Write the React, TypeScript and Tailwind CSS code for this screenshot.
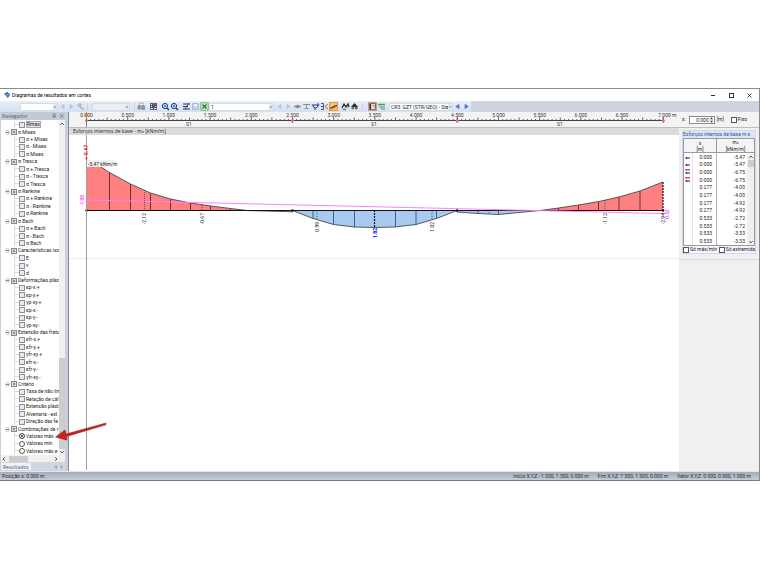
import type { ReactNode } from "react";
import clsx from "clsx";

type Node = { label: string; kind: "group" | "check" | "radio"; on?: boolean };

const group = (label: string, items: string[]): Node[] => [
  { label, kind: "group" },
  ...items.map((item): Node => ({ label: item, kind: "check" })),
];

const tree: Node[] = [
  { label: "Rmax", kind: "check", on: true },
  ...group("σ.Mises", ["σ.+.Mises", "σ.-.Mises", "σ.Mises"]),
  ...group("σ.Tresca", ["σ.+.Tresca", "σ.-.Tresca", "σ.Tresca"]),
  ...group("σ.Rankine", ["σ.+.Rankine", "σ.-.Rankine", "σ.Rankine"]),
  ...group("σ.Bach", ["σ.+.Bach", "σ.-.Bach", "σ.Bach"]),
  ...group("Características iso", ["E", "v", "d"]),
  ...group("Deformações plást", ["εp-x.+", "εp-y.+", "γp-xy.+", "εp-x.-", "εp-y.-", "γp-xy.-"]),
  ...group("Extensão das fratu", ["εfr-x.+", "εfr-y.+", "γfr-xy.+", "εfr-x.-", "εfr-y.-", "γfr-xy.-"]),
  ...group("Critério", ["Taxa de não lin", "Relação de cál", "Extensão plást", "Alvenaria - ext", "Direção das fe"]),
  { label: "Combinações de r", kind: "group" },
  { label: "Valores máx", kind: "radio", on: true },
  { label: "Valores mín", kind: "radio" },
  { label: "Valores máx e", kind: "radio" },
];

const rows: [string, string][] = [
  ["0.000", "-5.47"],
  ["0.000", "-5.47"],
  ["0.000", "-6.75"],
  ["0.000", "-6.75"],
  ["0.277", "-4.00"],
  ["0.277", "-4.00"],
  ["0.277", "-4.92"],
  ["0.277", "-4.92"],
  ["0.533", "-2.72"],
  ["0.533", "-2.72"],
  ["0.533", "-3.33"],
  ["0.533", "-3.33"],
];

function Tool({ label, active, children }: { label: string; active?: boolean; children: ReactNode }) {
  return (
    <button
      aria-label={label}
      className={clsx("h-[9px] w-[9px] shrink-0", active && "bg-[#ffc45c] outline outline-[#d8a04a] -outline-offset-1")}
    >
      <svg viewBox="0 0 9 9" className="h-[9px] w-[9px]" fill="none">
        {children}
      </svg>
    </button>
  );
}

function Prev({ dim }: { dim?: boolean }) {
  return (
    <Tool label="Anterior">
      <path d="M6 2.5L2.8 4.5L6 6.5Z" fill={dim ? "#c6d4f0" : "#5b82dc"} stroke={dim ? "#9db2e0" : "#2c55bd"} strokeWidth=".6" />
    </Tool>
  );
}

function Next({ dim }: { dim?: boolean }) {
  return (
    <Tool label="Seguinte">
      <path d="M3 2.5L6.2 4.5L3 6.5Z" fill={dim ? "#c6d4f0" : "#5b82dc"} stroke={dim ? "#9db2e0" : "#2c55bd"} strokeWidth=".6" />
    </Tool>
  );
}

function Combo({ label, value, className }: { label: string; value?: string; className: string }) {
  return (
    <div className={clsx("relative h-[8px] shrink-0 border border-[#d5dbe6]", className)}>
      <select aria-label={label} className="block h-[6px] w-full appearance-none pl-px leading-[6px]">
        <option>{value}</option>
      </select>
      <svg viewBox="0 0 4 6" className="pointer-events-none absolute top-0 right-0 h-[6px] w-[4px] bg-[#e4e7ed]">
        <path d="M.8 2.5h2.4L2 4z" fill="#6a6f7a" />
      </svg>
    </div>
  );
}

function Magnifier() {
  return (
    <>
      <circle cx="4" cy="4" r="2.6" fill="#cfe4ff" stroke="#173c8c" strokeWidth="1" />
      <path d="M2.8 4h2.4M4 2.8v2.4" stroke="#173c8c" strokeWidth=".7" />
      <path d="M6 6l2 2" stroke="#173c8c" strokeWidth="1.4" />
    </>
  );
}

function Separator() {
  return <span className="h-[7px] w-px shrink-0 bg-[#c9d1df]" />;
}

function Toolbar() {
  return (
    <div className="flex h-[11px] shrink-0 items-center bg-[#ced3df]">
      <div className="flex h-full items-center bg-gradient-to-b from-[#eaeff8] to-[#d5dfef] pl-5">
        <Combo label="Corte" className="w-[38px] bg-white" />
        <Prev dim />
        <Next dim />
        <Tool label="Selecionar corte">
          <path d="M2 2h3v2H2zM5 6h2v2" stroke="#a9a0a8" strokeWidth=".9" />
          <path d="M3 4l3 3" stroke="#d08a8a" strokeWidth=".8" />
        </Tool>
        <div className="flex items-center gap-1 px-0.5">
          <Separator />
          <Combo label="Superfície" className="w-[38px] bg-[#eceef1]" />
          <Separator />
        </div>
        <div className="flex items-center gap-[3px]">
          <Tool label="Imprimir">
            <path d="M2.5 1h3.5v3h-3.5z" fill="#fff" stroke="#777" strokeWidth=".6" />
            <path d="M1 4h6.5v3H1z" fill="#a5adb8" stroke="#555c68" strokeWidth=".6" />
            <circle cx="6.7" cy="6.5" r="1.4" fill="#7b93bd" />
          </Tool>
          <Tool label="Tabela de resultados">
            <path d="M1 1.2h7v6.6H1z" fill="#34446f" />
            <path d="M1.8 2.6h1.4M1.8 4.5h1.2M6.2 4.5h1.2M1.8 6.5h2M5 6.5h2.4" stroke="#fff" strokeWidth="1" />
            <path d="M4 2.6h3.4M3.4 4.5h2.4" stroke="#dd3b32" strokeWidth="1.1" />
          </Tool>
          <div className="flex">
            <Tool label="Ampliar"><Magnifier /></Tool>
            <Tool label="Mostrar tudo"><Magnifier /></Tool>
          </div>
          <div className="flex">
            <Tool label="Definições">
              <path d="M1 2h7M1 4.5h5M1 7h4" stroke="#24345f" strokeWidth="1.1" />
              <path d="M7 1L3 7" stroke="#26457e" strokeWidth=".9" />
              <path d="M5 6h3v2H5z" fill="#6e8ac0" />
            </Tool>
            <Tool label="Guardar">
              <path d="M1.5 1.5h6v6h-6z" fill="#c3d0e6" stroke="#9aabc9" strokeWidth=".7" />
              <path d="M3 2h3v2.5H3z" fill="#edf2fa" />
            </Tool>
            <Tool label="Exportar para Excel">
              <path d="M.8.8h7.4v7.4H.8z" fill="#d8edd5" stroke="#5aa860" strokeWidth=".8" />
              <path d="M2.5 2.5l4 4M6.5 2.5l-4 4" stroke="#1d7a29" strokeWidth="1.3" />
            </Tool>
          </div>
        </div>
        <Combo label="Número" value="1" className="w-[65px] bg-white" />
        <div className="flex pl-px">
          <Prev dim />
          <Next dim />
          <Tool label="Ver valores">
            <path d="M1 4.5Q4.5 2 8 4.5Q4.5 7 1 4.5Z" fill="#c3c9cf" stroke="#7c838a" strokeWidth=".8" />
            <circle cx="4.5" cy="4.5" r=".9" fill="#5b636c" />
          </Tool>
          <Tool label="Média">
            <path d="M1 2.5h7M4.5 2.5v4M2.5 6.5h4" stroke="#7f9a87" strokeWidth="1" />
          </Tool>
          <Tool label="Alisamento">
            <path d="M.8 3h7.5M2 3q0 3 2.5 3t2.5-3V1M4 6v2" stroke="#2a3a7e" strokeWidth="1" />
          </Tool>
          <Tool label="Espelhar">
            <path d="M1 1.5h2.5v6H1M1 4.5h2.5" stroke="#30468e" strokeWidth=".9" />
            <path d="M8 2L5 4.5L8 7" stroke="#d23c3c" strokeWidth=".9" />
          </Tool>
          <Tool label="Linha média" active>
            <path d="M1 6L3.5 5.5L5.5 4L8 3.5" stroke="#26305c" strokeWidth="1.2" />
            <path d="M1 7.2L8 4.5" stroke="#cf4a2a" strokeWidth=".7" />
          </Tool>
        </div>
        <div className="flex px-[3px]">
          <Tool label="Valores extremos">
            <path d="M1 6l2-4 2 3 2-3 1 3" stroke="#252c2c" strokeWidth="1.3" />
            <path d="M2 7.5h3" stroke="#2f9a38" strokeWidth="1.3" />
            <path d="M5 5.5h2" stroke="#c9962a" strokeWidth="1.2" />
          </Tool>
          <Tool label="Cores">
            <path d="M4.5 1L8 5H1z" fill="#1e2b2b" />
            <circle cx="2.8" cy="6" r="1.4" fill="#2b9a3d" />
            <circle cx="6.2" cy="6" r="1.4" fill="#c92c2c" />
          </Tool>
        </div>
        <Separator />
        <div className="flex pr-[3px] pl-[5px]">
          <Tool label="Mostrar painel" active>
            <path d="M1.5 1.5h6v6h-6z" fill="#f5f7fb" stroke="#4a5278" strokeWidth=".8" />
            <path d="M2.5 2v5" stroke="#26305c" strokeWidth="1.4" />
            <path d="M4.5 3.2h2.5M4.5 5h2.5" stroke="#5877b8" strokeWidth=".8" />
          </Tool>
          <Tool label="Legenda">
            <path d="M1 2.5h7" stroke="#3fa14c" strokeWidth="1.6" />
            <path d="M2 5h6M4 7h4" stroke="#4f8f7c" strokeWidth="1" />
          </Tool>
        </div>
        <Combo label="Combinação" value="CR3: GZT (STR/GEO) - Sta" className="w-[64px] bg-white" />
        <Prev />
        <Next />
      </div>
    </div>
  );
}

function TreeRow({ node }: { node: Node }) {
  if (node.kind === "group") {
    return (
      <li className="flex min-h-0 flex-1 items-center pl-[4px]">
        <button aria-label={`Recolher ${node.label}`} className="relative h-[5px] w-[5px] shrink-0 rounded-full border border-[#c4c4c4] bg-white">
          <span className="absolute top-px left-0 h-px w-[3px] bg-[#888]" />
        </button>
        <label className="flex items-center whitespace-nowrap">
          <input type="checkbox" className="mx-px h-[6px] w-[6px] shrink-0 appearance-none border border-[#8a8a8a] bg-[#8f8f8f] outline outline-[#d8d8d8] -outline-offset-2" />
          {node.label}
        </label>
      </li>
    );
  }

  return (
    <li className="flex min-h-0 flex-1 items-center pl-[13px]">
      <span className="w-[5px] shrink-0 self-stretch border-l border-[#dcdcdc]">
        <span className="block h-1/2 border-b border-[#dcdcdc]" />
      </span>
      <label className="flex items-center whitespace-nowrap">
        {node.kind === "check" ? (
          <input type="checkbox" className="mr-px h-[6px] w-[6px] shrink-0 appearance-none border border-[#8b9198] bg-[#e6e9ee]" />
        ) : (
          <input
            type="radio"
            name="combination"
            defaultChecked={node.on}
            className="mr-px h-[6px] w-[6px] shrink-0 appearance-none rounded-full border border-[#555] bg-white checked:bg-[#222] checked:outline checked:outline-white checked:-outline-offset-2"
          />
        )}
        <span className={clsx(node.kind === "check" && node.on && "border border-[#a8a8a8] bg-[#e3e3e3] leading-[5px]")}>
          {node.label}
        </span>
      </label>
    </li>
  );
}

function Chevron({ d }: { d: string }) {
  return (
    <svg viewBox="0 0 6 6" className="h-[6px] w-[6px] shrink-0" fill="none" stroke="#404040" strokeWidth="1">
      <path d={d} />
    </svg>
  );
}

const UP = "M1.3 3.8L3 2.1L4.7 3.8";
const DOWN = "M1.3 2.2L3 3.9L4.7 2.2";
const LEFT = "M3.8 1.3L2.1 3L3.8 4.7";
const RIGHT = "M2.2 1.3L3.9 3L2.2 4.7";

function Navigator() {
  return (
    <aside className="flex w-[69px] shrink-0 flex-col border-r border-[#858b96] bg-[#c9d0dc] pr-[3px] pl-px">
      <header className="flex h-[8px] shrink-0 items-center justify-between bg-[#c3c9d5] px-px text-[#5c6370]">
        <h2 className="font-['Open_Sans','Noto_Sans',sans-serif]">Navegador</h2>
        <svg viewBox="0 0 12 6" className="h-[6px] w-[12px]" fill="none" stroke="#70757f" strokeWidth=".7">
          <path d="M1.2 1h2v2.5h-2zM.6 3.5h3.2M2.2 3.5v2M8 1l3.5 4M11.5 1L8 5" />
        </svg>
      </header>
      <div className="flex min-h-0 flex-1 bg-white">
        <ul className="flex min-w-0 flex-1 flex-col overflow-hidden pt-px">
          {tree.map((node, i) => (
            <TreeRow key={i} node={node} />
          ))}
        </ul>
        <div className="flex w-[6px] shrink-0 flex-col bg-[#f0f0f0] pt-px">
          <Chevron d={UP} />
          <div className="flex-1" />
          <div className="h-[91px] bg-[#cdcdcd]" />
          <Chevron d={DOWN} />
        </div>
      </div>
      <div className="flex h-[7px] shrink-0 items-center bg-[#f0f0f0] pr-[6px]">
        <Chevron d={LEFT} />
        <div className="ml-[2px] h-[6px] w-[19px] bg-[#cdcdcd]" />
        <div className="flex-1" />
        <Chevron d={RIGHT} />
      </div>
      <div className="flex h-[9px] shrink-0 items-center justify-between bg-[#cfd6e2]">
        <button className="h-[7px] bg-[#eff3f9] px-[2px] font-['Open_Sans','Noto_Sans',sans-serif] leading-[6px] text-[#44516a]">Resultados</button>
        <svg viewBox="0 0 12 6" className="h-[6px] w-[12px]" fill="none" stroke="#8a93a3" strokeWidth=".7">
          <path d="M3.5 1.5L1.5 3l2 1.5zM8 1.5L10 3L8 4.5z" />
        </svg>
      </div>
    </aside>
  );
}

// One metre of the section is 82.4 units wide, the section starts at x = 17.5
const toX = (m: number) => 17.5 + m * 82.4;

function Ruler() {
  return (
    <svg viewBox="0 0 610 15" preserveAspectRatio="xMinYMin" className="h-[15px] w-full bg-[#f3f3f3]">
      <path d={`M${toX(0)} 8.5H${toX(7)}`} stroke="#444" strokeWidth="1" />
      {Array.from({ length: 141 }, (_, i) => {
        const top = i % 10 === 0 ? 5 : i % 5 === 0 ? 5.5 : 7;
        return <path key={i} d={`M${toX(i / 20)} ${top}V9`} stroke="#444" strokeWidth=".8" />;
      })}
      {Array.from({ length: 15 }, (_, i) => (
        <text key={i} x={toX(i / 2) + (i === 14 ? 4 : 0)} y="4.5" textAnchor="middle" fill="#333">
          {(i / 2).toFixed(3)}
          {i === 14 && " m"}
        </text>
      ))}
      {[120, 305, 491].map((x) => (
        <text key={x} x={x} y="14" textAnchor="middle" fill="#333">
          S1
        </text>
      ))}
      {[0, 2.5, 4.5, 7].map((m) => (
        <g key={m}>
          <path d={`M${toX(m)} 6v5`} stroke="#444" strokeWidth=".8" />
          <circle cx={toX(m)} cy="8.5" r="1.5" fill="#f06a6a" />
        </g>
      ))}
      <path d="M17.5 0V15" stroke="#8a8a8a" />
      <path d="M16 1.5h3v3h-3z" fill="#d8862a" />
    </svg>
  );
}

const values = [
  { x: 75, y: 87, text: "-2.12" },
  { x: 133, y: 87, text: "-0.67" },
  { x: 248, y: 96, text: "0.99" },
  { x: 363, y: 96, text: "1.02" },
  { x: 536, y: 87, text: "-1.12" },
  { x: 594, y: 87, text: "-2.94" },
];

function Diagram() {
  return (
    <svg viewBox="0 0 610 335" preserveAspectRatio="xMinYMin" className="h-full w-full">
      <path d="M0 123.5H610" stroke="#ececec" />

      <path d="M17.5 75.5V32H32L40.5 37.5L61.5 49L81.5 58L101.5 64L121.5 68L141.5 71L161.5 73.5L178 75.5Z" fill="#ff8080" />
      <path d="M471 75.5L489.5 73L509.5 70L530 66.5L550 62L571 56L594 47V75.5Z" fill="#ff8080" />
      <path
        d="M178 75.5L223.5 76.8V75.5L244 83.5L264.5 89.5L285 92L305.5 92.5L326 92L347 89.5L367.5 83.5L388 75.5V77L409 78.5L429.5 79.5L450 77.5L471 75.5Z"
        fill="#a6caf0"
      />

      <g stroke="#5a2b2b" strokeWidth=".9">
        <path d="M40.5 37.5V75M61.5 49V75M81.5 58V75M101.5 64V75M121.5 68V75M141.5 71V75M161.5 73.5V75" />
        <path d="M489.5 73V75M509.5 70V75M529.5 66.5V75M550 62V75M571 56V75" />
      </g>
      <path
        d="M244 75V83.5M264.5 75V89.5M285.5 75V92M326.5 75V92M347 75V89.5M367.5 75V83.5M409 75V78.5M429.5 75V79.5"
        stroke="#3c5268"
        strokeWidth=".9"
      />
      <path d="M75.5 55V75M133 70V75M248 75V85M363 75V85M420 75V79M536 65V75" stroke="#444" strokeWidth=".8" strokeDasharray="1 1" />
      <path d="M305.5 75V93M594 47V75" stroke="#111" strokeWidth="1.2" strokeDasharray="2 1" />

      <path
        d="M32 32L40.5 37.5L61.5 49L81.5 58L101.5 64L121.5 68L141.5 71L161.5 73.5L178 75.5L223.5 76.8V75.5L244 83.5L264.5 89.5L285 92L305.5 92.5L326 92L347 89.5L367.5 83.5L388 75.5V77L409 78.5L429.5 79.5L450 77.5L471 75.5L489.5 73L509.5 70L530 66.5L550 62L571 56L594 47"
        fill="none"
        stroke="#484848"
        strokeWidth=".9"
      />
      <path d="M17.5 75.5H594" stroke="#111" strokeWidth="1.1" />
      <path d="M17.5 65L594 78.5" stroke="#ff80ff" strokeWidth="1" />
      {[17.5, 223.5, 388, 594].map((x) => (
        <circle key={x} cx={x} cy="75.5" r="1.2" fill="#111" />
      ))}

      {values.map((v) => (
        <text key={v.text} transform={`translate(${v.x + 2} ${v.y - 9}) rotate(-90)`} textAnchor="end" fill="#222">
          {v.text}
        </text>
      ))}
      <text transform="translate(308 103) rotate(-90)" fill="#0000ff" fontWeight="700">
        1.82
      </text>
      <text transform="translate(15 71) rotate(-90)" fill="#f000f0">
        -1.08
      </text>
      <text transform="translate(600 84) rotate(-90)" fill="#f000f0">
        0.32
      </text>

      <path d="M17.5 0V335" stroke="#a0a0a0" />
      <text transform="translate(19 22) rotate(-90)" fill="#ff0000" fontWeight="700">
        -5.47
      </text>
      <circle cx="17.5" cy="23.5" r=".9" fill="#ff0000" />
      <path d="M18 25h29v7H18z" fill="#f2f2f2" />
      <text x="19" y="30.5" fill="#222">
        -5.47 kNm/m
      </text>
    </svg>
  );
}

function RowMarker({ index }: { index: number }) {
  return (
    <svg viewBox="0 0 7 6" className="block h-[6px] w-[7px]">
      {index > 1 && <path d="M1 .8h5" stroke="#e64a4a" strokeWidth="1.5" />}
      <path d="M1 4L3 2.7v2.6zM3 3.5h3v1.1H3z" fill="#1b1b7a" />
    </svg>
  );
}

function ResultsTable() {
  return (
    <section className="mx-[3px] mt-[2px] border border-[#d3d6ee] bg-[#f4f5fb]">
      <h2 className="h-[7px] bg-[#dbe6f6] whitespace-nowrap text-[#24598f]">Esforços internos de base m-x</h2>
      <div className="relative border border-[#9a9a9a]">
        <table className="h-[106px] w-full table-fixed border-separate border-spacing-0 bg-white text-right leading-[6px]">
          <colgroup>
            <col className="w-[9px]" />
            <col className="w-[24px]" />
            <col />
            <col className="w-[7px]" />
          </colgroup>
          <thead className="bg-[#f4f4f4] text-center">
            <tr className="h-[13px]">
              <th colSpan={2} className="border-r border-b border-[#9a9a9a] p-0 font-normal">
                x<br />[m]
              </th>
              <th colSpan={2} className="border-b border-[#9a9a9a] p-0 font-normal">
                m<span className="text-[4px]">x</span><br />[kNm/m]
              </th>
            </tr>
          </thead>
          <tbody>
            {rows.map(([x, m], i) => (
              <tr key={i}>
                <td className="border-r border-[#e2e2e2] p-0">{i < 4 && <RowMarker index={i} />}</td>
                <td className="border-r border-[#b5b5b5] p-0 pr-[4px]">{x}</td>
                <td className="p-0 pr-[2px]">{m}</td>
                <td className="p-0" />
              </tr>
            ))}
          </tbody>
        </table>
        <div className="absolute right-0 bottom-0 flex h-[91px] w-[7px] flex-col items-center bg-[#f0f0f0]">
          <Chevron d={UP} />
          <div className="h-[7px] w-[6px] bg-[#cdcdcd]" />
          <div className="flex-1" />
          <Chevron d={DOWN} />
        </div>
      </div>
      <div className="flex h-[7px] items-center justify-between whitespace-nowrap">
        <label className="flex items-center">
          <input type="checkbox" className="mr-px h-[6px] w-[6px] appearance-none border border-[#555] bg-white" />
          Só máx/mín
        </label>
        <label className="flex items-center">
          <input type="checkbox" className="mr-px h-[6px] w-[6px] appearance-none border border-[#555] bg-white" />
          Só extremida
        </label>
      </div>
    </section>
  );
}

export default function App() {
  return (
    <div className="flex min-h-screen flex-col bg-white pt-[88px] pb-[89px] font-[Roboto,'Noto_Sans',sans-serif] text-[5px] leading-[7px] text-[#222]">
      <div className="relative flex flex-1 flex-col border-t border-r border-[#8a8a8a]">
        <header className="flex h-[12px] shrink-0 items-center bg-white pl-[3px]">
          <svg viewBox="0 0 8 8" className="h-[8px] w-[8px]">
            <path d="M1 3L4 1l3.3 2L5 7z" fill="#2d62a8" />
            <path d="M1 3l3 .6L5 7z" fill="#7fa6d8" />
            <path d="M4 3.6L7.3 3" stroke="#c9dcf2" strokeWidth=".6" />
          </svg>
          <h1 className="flex-1 pl-px text-black">Diagramas de resultados em cortes</h1>
          <div className="flex gap-[9px] pr-[5px]">
            <button aria-label="Minimizar" className="flex h-[9px] w-[10px] items-center justify-center">
              <span className="h-px w-[4px] bg-[#333]" />
            </button>
            <button aria-label="Maximizar" className="flex h-[9px] w-[9px] items-center justify-center">
              <span className="h-[5px] w-[5px] border border-[#333]" />
            </button>
            <button aria-label="Fechar" className="flex h-[9px] w-[9px] items-center justify-center">
              <svg viewBox="0 0 5 5" className="h-[5px] w-[5px]" stroke="#222" strokeWidth=".8">
                <path d="M.5.5l4 4M4.5.5l-4 4" />
              </svg>
            </button>
          </div>
        </header>

        <Toolbar />

        <div className="flex min-h-0 flex-1">
          <Navigator />
          <main className="flex min-w-0 flex-1 flex-col">
            <div className="shrink-0 border-b border-[#bdbdbd]">
              <Ruler />
            </div>
            <h2 className="h-[7px] shrink-0 bg-[#dcdcdc] pl-[4px] font-['Open_Sans','Noto_Sans',sans-serif] leading-[6px]">
              Esforços internos de base - m<span className="text-[4px]">x</span> [kNm/m]
            </h2>
            <div className="min-h-0 flex-1 overflow-hidden bg-white">
              <Diagram />
            </div>
          </main>
          <aside className="w-[80px] shrink-0 bg-[#f0f0f0]">
            <div className="flex h-[16px] items-center border-b border-[#bdbdbd] bg-[#f3f3f3] pl-[3px]">
              <label htmlFor="position">x:</label>
              <div className="ml-[3px] flex h-[8px] w-[26px] items-center border border-[#8c8c8c] bg-white">
                <input id="position" defaultValue="0.000" className="min-w-0 flex-1 text-right leading-[6px]" />
                <svg viewBox="0 0 5 6" className="h-[6px] w-[5px]" fill="#333">
                  <path d="M2.5.3l1.5 2H1zM2.5 5.7L1 3.7h3z" />
                </svg>
              </div>
              <span className="ml-[2px]">[m]</span>
              <label className="ml-[7px] flex items-center">
                <input type="checkbox" className="mr-px h-[6px] w-[6px] appearance-none border border-[#555] bg-white" />
                Fixo
              </label>
            </div>
            <ResultsTable />
            <div className="mt-[5px] border-t border-[#dadada]" />
          </aside>
        </div>

        <footer className="flex h-[10px] shrink-0 items-center justify-between border-t border-b border-t-[#e4e6ea] border-b-[#77797e] bg-gradient-to-b from-[#a4acb8] to-[#c6ccd5] pr-[8px] pl-[2px] text-[#2b2f36]">
          <p>Posição x: 0.000 m</p>
          <div className="flex gap-[9px]">
            <p>Início X,Y,Z: -1.500, 1.500, 0.000 m</p>
            <p>Fim X,Y,Z: 7.500, 1.500, 0.000 m</p>
            <p>Vetor X,Y,Z: 0.000, 0.000, 1.000 m</p>
          </div>
        </footer>

        {/* Callout arrow over the selected option */}
        <svg viewBox="0 0 54 22" className="pointer-events-none absolute bottom-[38px] left-[54px] h-[22px] w-[54px]">
          <path d="M52.5 4.5L13 15.5L14 20L3 17L12 10L12.5 13.5L52 3.5Z" fill="#999" opacity=".5" />
          <path d="M52 2L12 13L11 9L1.5 16L13 19L12.5 15.5L52 3.5Z" fill="#cc1f1f" stroke="#8f1a1a" strokeWidth=".5" />
        </svg>
      </div>
    </div>
  );
}
